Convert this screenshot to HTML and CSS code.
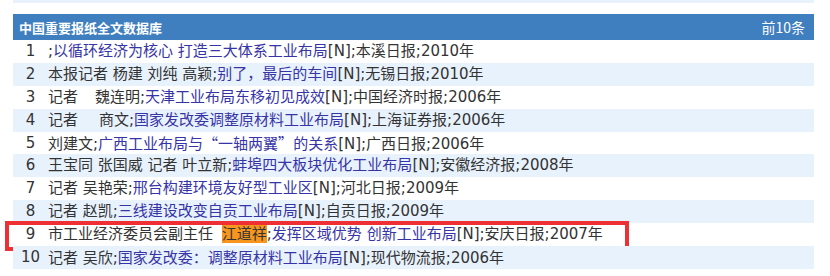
FILE: index.html
```html
<!DOCTYPE html>
<html lang="zh-CN">
<head>
    <meta charset="UTF-8">
    <title>中国重要报纸全文数据库</title>
    <link rel="stylesheet" href="styles.css">
</head>
<body>
    <div class="prev-strip"></div>

    <div class="box">
        <div class="box-head">
            <span class="box-title">中国重要报纸全文数据库</span>
            <span class="box-more">前10条</span>
        </div>
        <div class="list">
            <div class="row">
                <span class="num">1</span>
                <span class="item">;<a href="#">以循环经济为核心 打造三大体系工业布局</a>[N];本溪日报;2010年</span>
            </div>
            <div class="row alt">
                <span class="num">2</span>
                <span class="item">本报记者 杨建 刘纯 高颖;<a href="#">别了，最后的车间</a>[N];无锡日报;2010年</span>
            </div>
            <div class="row">
                <span class="num">3</span>
                <span class="item">记者<span class="gap-a"></span>魏连明;<a href="#">天津工业布局东移初见成效</a>[N];中国经济时报;2006年</span>
            </div>
            <div class="row alt">
                <span class="num">4</span>
                <span class="item">记者<span class="gap-b"></span>商文;<a href="#">国家发改委调整原材料工业布局</a>[N];上海证券报;2006年</span>
            </div>
            <div class="row">
                <span class="num">5</span>
                <span class="item">刘建文;<a href="#">广西工业布局与<span class="cjk">“</span>一轴两翼<span class="cjk">”</span>的关系</a>[N];广西日报;2006年</span>
            </div>
            <div class="row alt">
                <span class="num">6</span>
                <span class="item">王宝同 张国威 记者 叶立新;<a href="#">蚌埠四大板块优化工业布局</a>[N];安徽经济报;2008年</span>
            </div>
            <div class="row">
                <span class="num">7</span>
                <span class="item">记者 吴艳荣;<a href="#">邢台构建环境友好型工业区</a>[N];河北日报;2009年</span>
            </div>
            <div class="row alt">
                <span class="num">8</span>
                <span class="item">记者 赵凯;<a href="#">三线建设改变自贡工业布局</a>[N];自贡日报;2009年</span>
            </div>
            <div class="row marked">
                <span class="num">9</span>
                <span class="item">市工业经济委员会副主任 <span class="hl">江道祥</span>;<a href="#">发挥区域优势 创新工业布局</a>[N];安庆日报;2007年</span>
                <span class="mark-box"></span>
            </div>
            <div class="row alt">
                <span class="num">10</span>
                <span class="item">记者 吴欣;<a href="#">国家发改委<span class="cjk">：</span>调整原材料工业布局</a>[N];现代物流报;2006年</span>
            </div>
        </div>
    </div>
</body>
</html>
```

FILE: styles.css
```css
body {
    margin: 0;
    padding: 0 16px 0 13px;
    font-family: "DejaVu Sans", "Noto Sans CJK SC", sans-serif;
    color: #333;
    background: #fff;
}
.cjk {
    font-family: "Noto Sans CJK SC", sans-serif;
}
.prev-strip {
    height: 3px;
    background: #e8f2fd;
}
.box {
    margin-top: 11px;
}
.box-head {
    display: flex;
    justify-content: space-between;
    align-items: center;
    height: 26px;
    padding: 0 9px 0 6px;
    background: #3f7fc0;
    color: #fff;
    font-family: "Noto Sans CJK SC", sans-serif;
}
.box-title {
    font-size: 13px;
    font-weight: bold;
}
.box-more {
    font-size: 14px;
}
.row {
    position: relative;
    display: flex;
    height: 22.9px;
    line-height: 22.9px;
    font-size: 15px;
    white-space: nowrap;
}
.row.alt {
    background: #e8f2fd;
}
.num {
    width: 35px;
    text-align: center;
}
.item a {
    color: #3634a6;
    text-decoration: none;
}
.gap-a {
    display: inline-block;
    width: 17px;
}
.gap-b {
    display: inline-block;
    width: 21px;
}
.hl {
    margin-left: 4px;
    background: #f7961f;
}
.mark-box {
    position: absolute;
    left: -8px;
    top: -2px;
    width: 616px;
    height: 22px;
    border: 4px solid #ee3034;
    pointer-events: none;
}
```
